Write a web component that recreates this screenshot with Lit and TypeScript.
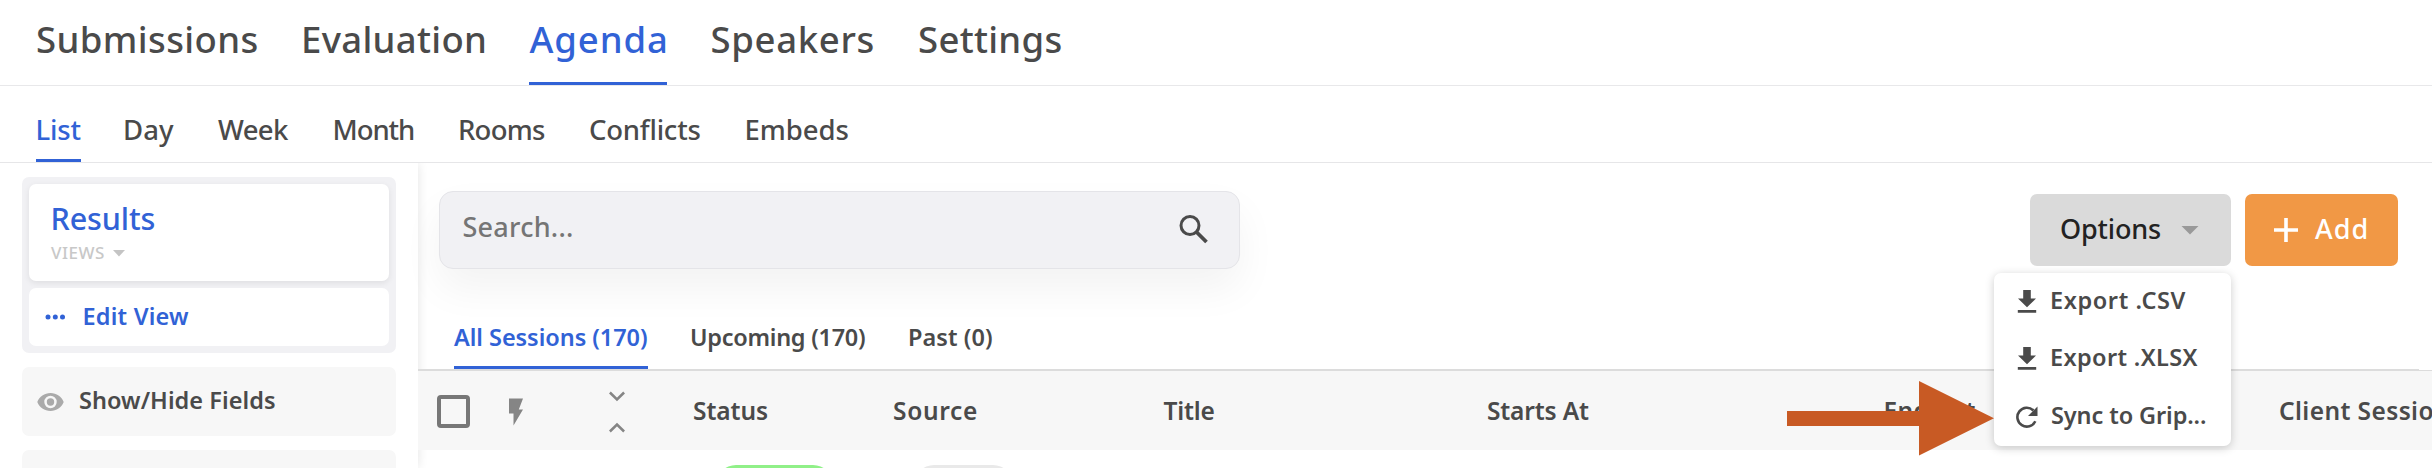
import { LitElement, html, css, svg } from "lit";
import { customElement, property } from "lit/decorators.js";
import { styleMap } from "lit/directives/style-map.js";

const FAMILY = '"Noto Sans", "Open Sans", sans-serif';
const pen = document.createElement("canvas").getContext("2d")!;

/** Headline sizes and the tiny caption use the medium cut, body sizes the semibold one. */
const weightFor = (size: number) => (size > 26 || size < 20 ? 500 : 600);

interface Label {
  text: string;
  size: number;
  /** width of the box */
  box: number;
  /** distance from the box edge to the first glyph */
  inset: number;
  /** width of the drawn glyphs */
  ink: number;
}

/** One line of text, tracked so that its glyphs span a given width. */
@customElement("fit-text")
export class FitText extends LitElement {
  @property({ attribute: false }) label!: Label;

  static styles = css`
    :host { display: block; white-space: nowrap; flex: none; }
    .line { display: block; }
    .glyphs { display: inline-block; }
  `;

  render() {
    const { text, size, box, inset, ink } = this.label;
    const weight = weightFor(size);
    pen.font = `${weight} ${size}px ${FAMILY}`;
    const m = pen.measureText(text);
    const drawn = m.actualBoundingBoxRight + m.actualBoundingBoxLeft;
    const tracking = (ink - drawn) / (text.length - 1);
    return html`<span class="line" style=${styleMap({ width: `${box}px` })}
      ><span
        class="glyphs"
        style=${styleMap({
          fontSize: `${size}px`,
          fontWeight: `${weight}`,
          letterSpacing: `${tracking.toFixed(3)}px`,
          marginLeft: `${(inset + m.actualBoundingBoxLeft).toFixed(2)}px`,
        })}
        >${text}</span
      ></span
    >`;
  }
}

const t = (text: string, size: number, box: number, inset: number, ink: number) =>
  html`<fit-text .label=${{ text, size, box, inset, ink }}></fit-text>`;

type Tab = [string, number, number, number];
const sections: Tab[] = [
  ["Submissions", 223, 1, 220.5],
  ["Evaluation", 186, 3, 181],
  ["Agenda", 138, 0.5, 136.5],
  ["Speakers", 166, 2.5, 162],
  ["Settings", 146, 2, 142.5],
];
const pages: Tab[] = [
  ["List", 45, 1.5, 43],
  ["Day", 52, 2, 49],
  ["Week", 73, 1, 71],
  ["Month", 84, 2.5, 79.5],
  ["Rooms", 88, 2, 85],
  ["Conflicts", 114, 2, 110.5],
  ["Embeds", 105, 2.5, 102],
];
const filters: Tab[] = [
  ["All Sessions (170)", 194, 0, 193],
  ["Upcoming (170)", 176, 2, 173],
  ["Past (0)", 84, 2, 82],
];
const columns: Tab[] = [
  ["Status", 200, 1, 74],
  ["Source", 270, 1, 83],
  ["Title", 324, 0.5, 51],
  ["Starts At", 397, 1, 101],
  ["Ends At", 395, 1.5, 90],
  ["Client Sessions", 190, 1, 182],
];

const download = svg`<svg width="20" height="24" viewBox="0 0 20 24"><path fill="#4a4a4a" d="M6.2 0h7.6v8.6h5.2L10 17.2 1 8.6h5.2zM.8 20h18.4v2.8H.8z"/></svg>`;
const refresh = svg`<svg width="24" height="24" viewBox="0 0 24 24"><path d="M20.3 16.2A9.4 9.4 0 1 1 18.4 5.5" fill="none" stroke="#4a4a4a" stroke-width="2.6"/><path fill="#4a4a4a" d="M22.5 1.6v9.5h-9.5z"/></svg>`;

@customElement("app-root")
export class AppRoot extends LitElement {
  static styles = css`
    :host {
      display: block; position: relative; width: 2432px; height: 468px; overflow: hidden;
      background: #fff; color: #4a4a4a; font-family: "Noto Sans", "Open Sans", sans-serif; font-weight: 500;
    }
    * { box-sizing: border-box; }
    svg { display: block; flex: none; }
    .tabs { display: flex; gap: 42px; }
    .tab { border-bottom: 3px solid transparent; }
    .tab.on { color: #3162d6; border-color: #3162d6; }
    .top { height: 86px; padding-left: 36px; border-bottom: 1px solid #e8e8ea; line-height: 77px; }
    .top .tab { height: 85px; padding-top: 1px; }
    .sub { height: 77px; padding-left: 36px; border-bottom: 1px solid #e6e6e8; line-height: 64px; }
    .sub .tab { height: 76px; padding-top: 12px; }
    .body { display: flex; height: 305px; }
    .side {
      width: 418px; flex: none; padding: 14px 22px 0; display: flex; flex-direction: column; gap: 14px;
      position: relative; background: #fff; box-shadow: 0 0 10px rgba(0, 0, 0, 0.11); clip-path: inset(0 -20px 0 0);
    }
    .views { height: 176px; padding: 7px; border-radius: 7px; background: #f1f1f4; display: flex; flex-direction: column; gap: 7px; }
    .current {
      height: 97px; border-radius: 7px; background: #fff; box-shadow: 0 2px 6px rgba(0, 0, 0, 0.08);
      padding: 15px 0 0 22px; color: #3162d6; line-height: 38px;
    }
    .kind { display: flex; align-items: center; gap: 9px; color: #c8c8c8; line-height: 18px; padding-top: 1px; }
    .edit {
      height: 58px; border-radius: 7px; background: #fff; color: #3162d6;
      display: flex; align-items: center; padding-left: 16px; gap: 19px; line-height: 56px;
    }
    .box { height: 69px; flex: none; border-radius: 7px; background: #f7f7f7; display: flex; align-items: center; gap: 15px; padding-left: 15px; line-height: 67px; }
    .main { flex: 1; min-width: 0; position: relative; display: flex; flex-direction: column; }
    .bar { height: 151px; padding: 28px 34px 0 21px; display: flex; align-items: flex-start; }
    .search {
      width: 801px; height: 78px; border: 1px solid #e4e4e8; border-radius: 14px; background: #f1f1f4; color: #757575;
      box-shadow: 0 20px 40px rgba(0, 0, 0, 0.05); display: flex; align-items: center; justify-content: space-between;
      padding: 0 30px 2px 23px; line-height: 72px;
    }
    .actions { margin: 3px 0 0 auto; display: flex; gap: 14px; line-height: 72px; }
    .btn { height: 72px; border-radius: 7px; display: flex; align-items: center; }
    .btn fit-text { padding-top: 1px; }
    .options { width: 201px; background: #dadada; color: #222; padding-left: 30px; gap: 20px; }
    .add { width: 153px; background: #f19845; color: #fff; padding-left: 29px; gap: 16px; }
    .filters { height: 55px; padding-left: 36px; line-height: 47px; }
    .filters .tab { height: 55px; }
    .rule { height: 2px; display: flex; }
    .rule-main { width: 2001px; background: #dcdcdc; }
    .rule-end { flex: 1; margin-top: 1px; background: #dcdcdc; }
    .head {
      height: 79px; background: #f7f7f7; display: grid; align-items: center; line-height: 79px; padding-left: 19px;
      grid-template-columns: 72px 100px 84px 200px 270px 324px 397px 395px 190px; overflow: hidden;
    }
    .check { width: 33px; height: 33px; border: 4px solid #777; border-radius: 4px; margin-bottom: 2px; }
    .head svg { margin-bottom: 2px; }
    .pills { display: flex; padding: 15px 0 0 298px; gap: 81px; }
    .pill { height: 40px; border-radius: 20px; }
    .green { width: 117px; background: #90f088; }
    .grey { width: 99px; background: #e9e9e9; }
    .row { height: 18px; overflow: hidden; }
    .menu {
      position: absolute; left: 1994px; top: 273px; width: 237px; height: 173px; border-radius: 7px; background: #fff;
      box-shadow: 0 2px 10px rgba(0, 0, 0, 0.2); line-height: 57.6px; z-index: 2;
    }
    .item { display: flex; align-items: center; height: 57.6px; padding-left: 23px; gap: 14px; }
    .item.sync { padding-left: 21px; gap: 12px; }
    .arrow { position: absolute; left: 1787px; top: 381px; z-index: 3; }
  `;

  private tabs(list: Tab[], size: number, active: string) {
    return list.map(([s, box, inset, ink]) =>
      html`<div class="tab ${s === active ? "on" : ""}">${t(s, size, box, inset, ink)}</div>`);
  }

  render() {
    return html`
      <nav class="tabs top">${this.tabs(sections, 36.5, "Agenda")}</nav>
      <nav class="tabs sub">${this.tabs(pages, 27.5, "List")}</nav>
      <div class="body">
        <aside class="side">
          <div class="views">
            <div class="current">
              ${t("Results", 30.5, 110, 1.5, 102)}
              <div class="kind">
                ${t("VIEWS", 17, 53, 0, 53)}
                <svg width="12" height="7" viewBox="0 0 12 7"><path fill="#c4c4c4" d="M0 0h12L6 6.5z" /></svg>
              </div>
            </div>
            <div class="edit">
              <svg width="20" height="6" viewBox="0 0 20 6"><g fill="#3162d6"><circle cx="3" cy="3" r="2.5" /><circle cx="10.3" cy="3" r="2.5" /><circle cx="17.5" cy="3" r="2.5" /></g></svg>
              ${t("Edit View", 23.5, 110, 0.5, 104.5)}
            </div>
          </div>
          <div class="box">
            <svg width="27" height="20" viewBox="0 0 27 20"><path fill="#aaa" fill-rule="evenodd" d="M13.5 1C7.5 1 2.4 4.7.3 10c2.1 5.3 7.2 9 13.2 9s11.1-3.7 13.2-9C24.6 4.7 19.5 1 13.5 1zm0 15.2a6.2 6.2 0 1 1 0-12.4 6.2 6.2 0 0 1 0 12.4zm0-2.5a3.7 3.7 0 1 0 0-7.4 3.7 3.7 0 0 0 0 7.4z" /></svg>
            ${t("Show/Hide Fields", 23.5, 200, 1, 195)}
          </div>
          <div class="box"></div>
        </aside>
        <main class="main">
          <div class="bar">
            <div class="search">
              ${t("Search...", 27, 110, 0.5, 108.5)}
              <svg width="30" height="30" viewBox="0 0 30 30"><g fill="none" stroke="#4a4a4a"><circle cx="11" cy="11.5" r="9" stroke-width="3" /><path d="M17.5 18l10 10" stroke-width="3.8" /></g></svg>
            </div>
            <div class="actions">
              <div class="btn options">
                ${t("Options", 27, 101, 1, 99)}
                <svg width="18" height="9" viewBox="0 0 18 9"><path fill="#999" d="M.5 0h17L9 8.6z" /></svg>
              </div>
              <div class="btn add">
                <svg width="24" height="24" viewBox="0 0 24 24"><path stroke="#fff" stroke-width="3.6" d="M12 0v24M0 12h24" /></svg>
                ${t("Add", 27, 54, 1, 51.5)}
              </div>
            </div>
          </div>
          <div class="tabs filters">${this.tabs(filters, 23.5, "All Sessions (170)")}</div>
          <div class="rule"><div class="rule-main"></div><div class="rule-end"></div></div>
          <div class="head">
            <div class="check"></div>
            <svg width="14" height="28" viewBox="0 0 14 28"><path fill="#858585" d="M0 .5h14L9.8 11.5H14L4.5 27.5V15.5H0z" /></svg>
            <svg width="16" height="42" viewBox="0 0 16 42"><path fill="none" stroke="#858585" stroke-width="2.5" d="M.9 1.5L8 8.5l7.1-7M.9 40.5L8 33.5l7.1 7" /></svg>
            ${columns.map(([s, box, inset, ink]) => t(s, 24.5, box, inset, ink))}
          </div>
          <div class="row"><div class="pills"><div class="pill green"></div><div class="pill grey"></div></div></div>
        </main>
      </div>
      <div class="menu">
        <div class="item">${download}${t("Export .CSV", 23.5, 150, 1, 133.5)}</div>
        <div class="item">${download}${t("Export .XLSX", 23.5, 150, 1, 145.5)}</div>
        <div class="item sync">${refresh}${t("Sync to Grip...", 23.5, 160, 1, 154)}</div>
      </div>
      <svg class="arrow" width="207" height="75" viewBox="0 0 207 75"><path fill="#c85a24" d="M0 30h132V0l75 37.2L132 74.5V45H0z" /></svg>
    `;
  }
}
